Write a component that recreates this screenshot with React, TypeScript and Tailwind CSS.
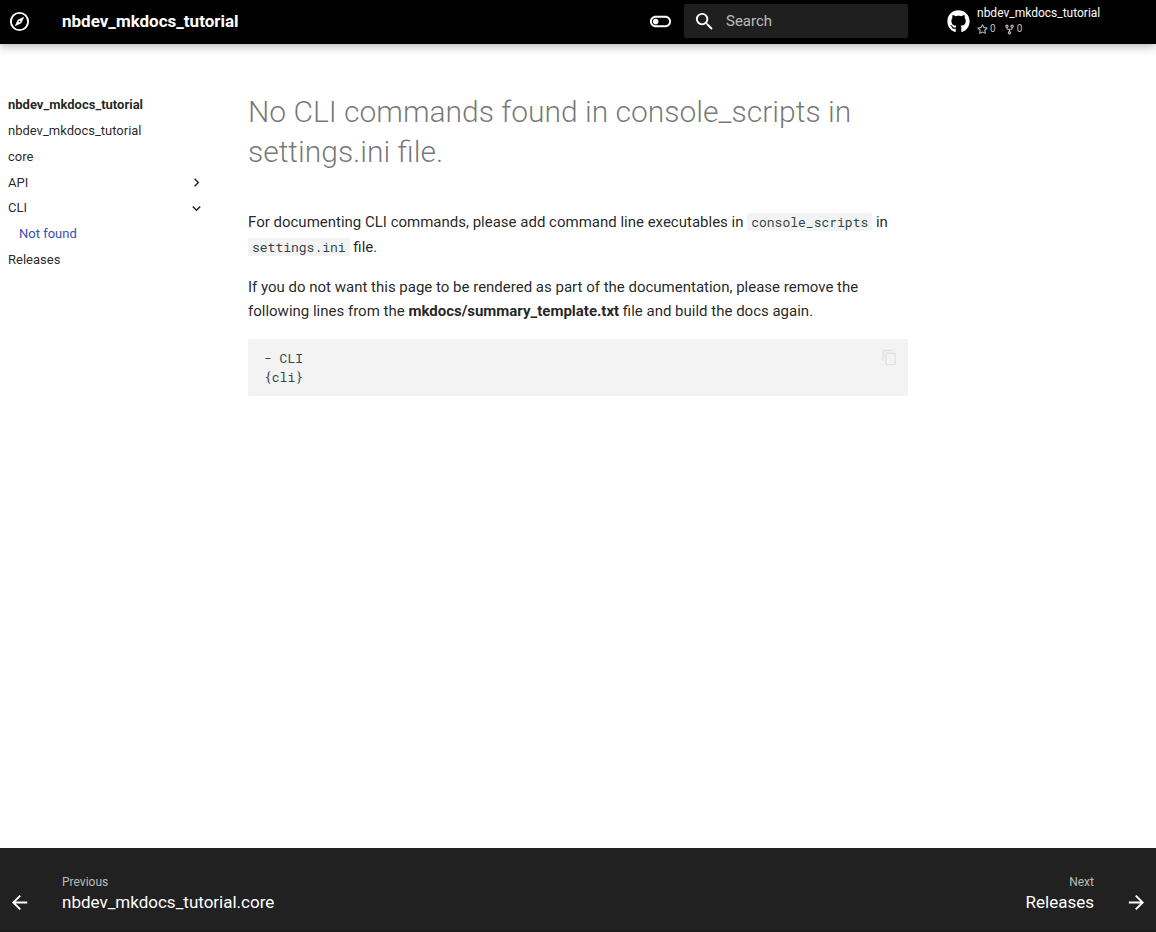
import React from "react";
import { FaGithub } from "react-icons/fa";

const icons = {
  compass:
    "M7 17l3.2-6.8L17 7l-3.2 6.8L7 17m5-5.9a.9.9 0 0 0-.9.9.9.9 0 0 0 .9.9.9.9 0 0 0 .9-.9.9.9 0 0 0-.9-.9M12 2a10 10 0 0 1 10 10 10 10 0 0 1-10 10A10 10 0 0 1 2 12 10 10 0 0 1 12 2m0 2a8 8 0 0 0-8 8 8 8 0 0 0 8 8 8 8 0 0 0 8-8 8 8 0 0 0-8-8z",
  toggle:
    "M17 6H7c-3.31 0-6 2.69-6 6s2.69 6 6 6h10c3.31 0 6-2.69 6-6s-2.69-6-6-6zm0 10H7c-2.21 0-4-1.79-4-4s1.79-4 4-4h10c2.21 0 4 1.79 4 4s-1.79 4-4 4zM7 9c-1.66 0-3 1.34-3 3s1.34 3 3 3 3-1.34 3-3-1.34-3-3-3z",
  search:
    "M9.5 3A6.5 6.5 0 0 1 16 9.5c0 1.61-.59 3.09-1.56 4.23l.27.27h.79l5 5-1.5 1.5-5-5v-.79l-.27-.27A6.516 6.516 0 0 1 9.5 16 6.5 6.5 0 0 1 3 9.5 6.5 6.5 0 0 1 9.5 3m0 2C7 5 5 7 5 9.5S7 14 9.5 14 14 12 14 9.5 12 5 9.5 5z",
  chevron: "M8.59 16.58 13.17 12 8.59 7.41 10 6l6 6-6 6-1.41-1.42z",
  copy: "M19 21H8V7h11m0-2H8a2 2 0 0 0-2 2v14a2 2 0 0 0 2 2h11a2 2 0 0 0 2-2V7a2 2 0 0 0-2-2m-3-4H4a2 2 0 0 0-2 2v14h2V3h12V1z",
  left: "M20 11v2H8l5.5 5.5-1.42 1.42L4.16 12l7.92-7.92L13.5 5.5 8 11h12z",
  right: "M4 11v2h12l-5.5 5.5 1.42 1.42L19.84 12l-7.92-7.92L10.5 5.5 16 11H4z",
  star: "M8 .25a.75.75 0 0 1 .673.418l1.882 3.815 4.21.612a.75.75 0 0 1 .416 1.279l-3.046 2.97.719 4.192a.751.751 0 0 1-1.088.791L8 12.347l-3.766 1.98a.75.75 0 0 1-1.088-.79l.72-4.194L.818 6.374a.75.75 0 0 1 .416-1.28l4.21-.611L7.327.668A.75.75 0 0 1 8 .25Zm0 2.445L6.615 5.5a.75.75 0 0 1-.564.41l-3.097.45 2.24 2.184a.75.75 0 0 1 .216.664l-.528 3.084 2.769-1.456a.75.75 0 0 1 .698 0l2.77 1.456-.53-3.084a.75.75 0 0 1 .216-.664l2.24-2.183-3.096-.45a.75.75 0 0 1-.564-.41L8 2.694Z",
  fork: "M5 5.372v.878c0 .414.336.75.75.75h4.5a.75.75 0 0 0 .75-.75v-.878a2.25 2.25 0 1 1 1.5 0v.878a2.25 2.25 0 0 1-2.25 2.25h-1.5v2.128a2.251 2.251 0 1 1-1.5 0V8.5h-1.5A2.25 2.25 0 0 1 3.5 6.25v-.878a2.25 2.25 0 1 1 1.5 0ZM5 3.25a.75.75 0 1 0-1.5 0 .75.75 0 0 0 1.5 0Zm6.75.75a.75.75 0 1 0 0-1.5.75.75 0 0 0 0 1.5Zm-3 8.75a.75.75 0 1 0-1.5 0 .75.75 0 0 0 1.5 0Z",
};

function Icon({ name, className, box = 24 }: { name: keyof typeof icons; className: string; box?: number }) {
  return (
    <svg viewBox={`0 0 ${box} ${box}`} className={className} fill="currentColor" aria-hidden="true">
      <path d={icons[name]} />
    </svg>
  );
}

function Header() {
  return (
    <header className="relative flex h-11 items-center bg-black pb-0.5 text-white shadow-[0_0_4px_rgba(0,0,0,0.1),0_4px_8px_rgba(0,0,0,0.2)]">
      <a href="#home" aria-label="nbdev_mkdocs_tutorial" className="px-2">
        <Icon name="compass" className="size-[23px]" />
      </a>
      <span className="ml-[23px] flex-1 truncate text-[17px] font-bold leading-6">nbdev_mkdocs_tutorial</span>
      <button type="button" aria-label="Switch color mode" className="mr-3">
        <Icon name="toggle" className="size-[23px]" />
      </button>
      <label className="flex h-[34px] w-56 items-center rounded-xs bg-white/12 pl-[9px]">
        <Icon name="search" className="size-[23px] shrink-0" />
        <input
          type="search"
          aria-label="Search"
          placeholder="Search"
          className="ml-[10px] w-full min-w-0 bg-transparent text-[15px] outline-none placeholder:text-white/70"
        />
      </label>
      <a href="#repository" className="ml-4 flex w-58 items-center pl-[23px]">
        <FaGithub className="size-[23px] shrink-0" />
        <span className="ml-[7px] flex flex-col">
          <span className="text-[12px] leading-4">nbdev_mkdocs_tutorial</span>
          <span className="flex gap-2 text-[10px] leading-4 text-white/75">
            <span className="flex items-center gap-0.5">
              <Icon name="star" box={16} className="size-[11px]" />0
            </span>
            <span className="flex items-center gap-0.5">
              <Icon name="fork" box={16} className="size-[11px]" />0
            </span>
          </span>
        </span>
      </a>
    </header>
  );
}

function Sidebar() {
  return (
    <nav aria-label="Navigation" className="w-58 shrink-0 pt-12 pr-[27px] pl-2 text-[13px] leading-[26px]">
      <p className="font-bold">nbdev_mkdocs_tutorial</p>
      <ul>
        <li><a href="#index">nbdev_mkdocs_tutorial</a></li>
        <li><a href="#core">core</a></li>
        <li>
          <button type="button" aria-expanded="false" className="flex w-full items-center justify-between leading-[25px]">
            API
            <Icon name="chevron" className="size-[17px]" />
          </button>
        </li>
        <li>
          <button type="button" aria-expanded="true" className="flex w-full items-center justify-between">
            CLI
            <Icon name="chevron" className="size-[17px] rotate-90" />
          </button>
          <ul className="pl-[11px]">
            <li><a href="#not-found" aria-current="page" className="text-[#3c4db3]">Not found</a></li>
          </ul>
        </li>
        <li><a href="#releases">Releases</a></li>
      </ul>
    </nav>
  );
}

const mono = "font-['Roboto_Mono','Liberation_Mono',monospace] text-[13px] text-[#36464e]";

function Article() {
  return (
    <article className="mx-4 min-w-0 flex-1 pt-12 text-[15px] leading-6">
      <h1 className="mb-[38px] text-[30px] font-light leading-10 text-black/55">
        No CLI commands found in console_scripts in settings.ini file.
      </h1>
      <p className="mb-[15px] leading-[25px]">
        For documenting CLI commands, please add command line executables in{" "}
        <code className={`${mono} rounded-xs bg-[#f3f3f3] px-1`}>console_scripts</code> in{" "}
        <code className={`${mono} rounded-xs bg-[#f3f3f3] px-1`}>settings.ini</code> file.
      </p>
      <p className="mb-4">
        If you do not want this page to be rendered as part of the documentation, please remove the following lines
        from the <strong>mkdocs/summary_template.txt</strong> file and build the docs again.
      </p>
      <div className="flex items-start justify-between rounded-xs bg-[#f3f3f3] pt-[10px] pr-[10px] pb-[9px] pl-4">
        <pre className={`${mono} leading-[19px]`}>
          <code className="font-[inherit]">{"- CLI\n{cli}"}</code>
        </pre>
        <button type="button" aria-label="Copy to clipboard" className="text-black/7">
          <Icon name="copy" className="size-[17px]" />
        </button>
      </div>
    </article>
  );
}

function Footer() {
  return (
    <footer className="flex h-[84px] items-end justify-between border-b border-black/20 bg-[#212121] pb-[17px] text-white">
      <a href="#core" className="flex items-end pl-2">
        <Icon name="left" className="size-[23px]" />
        <span className="ml-[31px] flex flex-col">
          <span className="text-[12px] leading-4 text-white/70">Previous</span>
          <span className="text-[17px] leading-6">nbdev_mkdocs_tutorial.core</span>
        </span>
      </a>
      <a href="#releases" className="flex items-end pr-2 text-right">
        <span className="mr-[31px] flex flex-col">
          <span className="text-[12px] leading-4 text-white/70">Next</span>
          <span className="text-[17px] leading-6">Releases</span>
        </span>
        <Icon name="right" className="size-[23px]" />
      </a>
    </footer>
  );
}

export default function App() {
  return (
    <div className="flex min-h-screen flex-col bg-white font-['Roboto','Liberation_Sans',sans-serif] text-black/87">
      <Header />
      <main className="flex flex-1">
        <Sidebar />
        <Article />
        <div className="w-58 shrink-0" />
      </main>
      <Footer />
    </div>
  );
}
